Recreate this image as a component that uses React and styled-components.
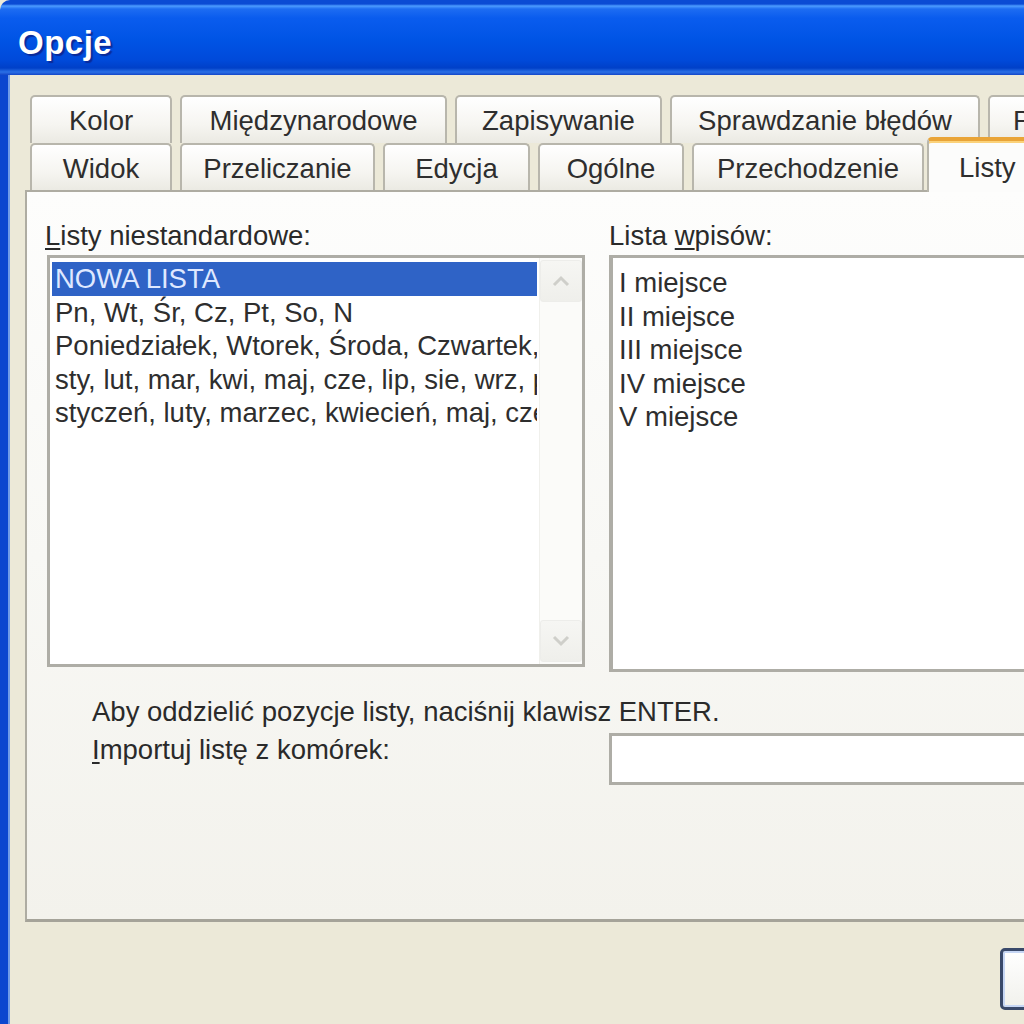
import React from "react";
import styled, { createGlobalStyle } from "styled-components";

const Global = createGlobalStyle`
  html, body { margin: 0; padding: 0; overflow: hidden; background: #ece9d8; }
  #root { width: 1024px; height: 1024px; }
`;

const FONT = `"Liberation Sans", Arial, sans-serif`;

const Window = styled.div`
  width: 1024px;
  height: 1024px;
  overflow: hidden;
  display: flex;
  flex-direction: column;
  font-family: ${FONT};
`;

const TitleBar = styled.div`
  flex: 0 0 75px;
  display: flex;
  align-items: center;
  padding-left: 18px;
  padding-top: 10px;
  box-sizing: border-box;
  border-top-left-radius: 10px;
  background: linear-gradient(
    to bottom,
    #0b4bd4 0px,
    #0b4bd4 4px,
    #4d9cff 6px,
    #1d6cf2 9px,
    #0a5cee 18px,
    #0054e5 40px,
    #004ada 60px,
    #0040c8 68px,
    #2b70e6 72px,
    #1446c8 75px
  );
`;

const Title = styled.span`
  color: #ffffff;
  font-family: ${FONT};
  font-weight: bold;
  font-size: 33px;
  letter-spacing: 0.5px;
  text-shadow: 2px 2px 1px #0a2a9a;
`;

const Frame = styled.div`
  flex: 1;
  display: flex;
  border-left: 8px solid #0b46cf;
  box-shadow: inset 2px 0 0 #6f9be8;
  background: #ece9d8;
  overflow: hidden;
`;

const Body = styled.div`
  flex: 0 0 1170px;
  display: flex;
  flex-direction: column;
  padding: 20px 0 0 17px;
  box-sizing: border-box;
`;

const TabStrip = styled.div`
  display: flex;
  flex-direction: column;
  padding-left: 5px;
`;

const TabRow = styled.div`
  display: flex;
  gap: 8px;
  height: ${(p) => p.$h}px;
  align-items: stretch;
`;

const Tab = styled.div`
  flex: 0 0 ${(p) => p.$w}px;
  box-sizing: border-box;
  display: flex;
  align-items: center;
  justify-content: center;
  border: 2px solid #b8b6ac;
  border-bottom: none;
  border-radius: 5px 5px 0 0;
  background: linear-gradient(to bottom, #ffffff 0%, #f6f5f1 60%, #ebeae3 100%);
  color: #2e2e2e;
  font-size: 27.5px;
  white-space: nowrap;
  padding-top: 2px;
`;

const ActiveTab = styled(Tab)`
  margin-top: -6px;
  margin-left: -5px;
  margin-bottom: -2px;
  position: relative;
  z-index: 1;
  justify-content: flex-start;
  padding-left: 30px;
  border-top: 4px solid #e9a437;
  box-shadow: inset 0 2px 0 #fbd27a;
  background: #fcfcfb;
`;

const Panel = styled.div`
  height: 732px;
  box-sizing: border-box;
  border: 2px solid #aeaca2;
  border-bottom: 3px solid #a5a399;
  background: linear-gradient(to bottom, #fdfdfc 0%, #f8f8f5 50%, #f3f2ec 100%);
  padding: 30px 0 0 18px;
  display: flex;
  flex-direction: column;
  color: #2a2a2a;
  font-size: 27.5px;
`;

const Columns = styled.div`
  display: grid;
  grid-template-columns: 540px 560px;
  column-gap: 24px;
`;

const Column = styled.div`
  display: flex;
  flex-direction: column;
`;

const Label = styled.div`
  height: 28px;
  line-height: 28px;
  margin-bottom: 5px;
  white-space: nowrap;
  u { text-decoration-thickness: 2px; text-underline-offset: 3px; }
`;

const ListBox = styled.div`
  margin-left: 2px;
  height: 412px;
  box-sizing: border-box;
  border: 3px solid #aeada6;
  background: #ffffff;
  display: flex;
`;

const ListItems = styled.div`
  flex: 1;
  min-width: 0;
  padding: 4px 2px;
  overflow: hidden;
`;

const ListItem = styled.div`
  height: 33.5px;
  line-height: 33.5px;
  padding-left: 3px;
  white-space: nowrap;
  overflow: hidden;
  color: ${(p) => (p.$selected ? "#dfe8ff" : "#2e2e2e")};
  background: ${(p) => (p.$selected ? "#2f63c6" : "transparent")};
`;

const ScrollBar = styled.div`
  flex: 0 0 42px;
  display: flex;
  flex-direction: column;
  justify-content: space-between;
  padding: 2px 0;
  background: #fbfbf9;
  border-left: 1px solid #f0f0ec;
`;

const ScrollButton = styled.div`
  height: 40px;
  display: flex;
  align-items: center;
  justify-content: center;
  background: linear-gradient(to bottom, #f6f6f3, #efefeb);
  border: 1px solid #ededea;
  border-radius: 3px;
`;

const EntriesBox = styled.div`
  height: 417px;
  box-sizing: border-box;
  border: 3px solid #aeada6;
  border-left-width: 4px;
  border-right: none;
  background: #ffffff;
  padding: 8px 6px;
`;

const Entry = styled.div`
  height: 33.5px;
  line-height: 33.5px;
  color: #2e2e2e;
  white-space: nowrap;
`;

const Hint = styled.div`
  margin-top: 25px;
  padding-left: 47px;
  height: 30px;
  line-height: 30px;
  white-space: nowrap;
`;

const ImportRow = styled.div`
  margin-top: 6px;
  display: grid;
  grid-template-columns: 540px 560px;
  column-gap: 24px;
  align-items: start;
`;

const ImportLabel = styled.div`
  padding-left: 47px;
  line-height: 30px;
  padding-top: 2px;
  white-space: nowrap;
  u { text-decoration-thickness: 2px; text-underline-offset: 3px; }
`;

const TextInput = styled.div`
  height: 52px;
  box-sizing: border-box;
  border: 3px solid #aeada6;
  border-right: none;
  background: #ffffff;
`;

const Footer = styled.div`
  flex: 1;
  display: flex;
  padding: 26px 0 0 975px;
`;

const Button = styled.div`
  width: 150px;
  height: 62px;
  box-sizing: border-box;
  border: 3px solid #39496a;
  border-radius: 5px;
  box-shadow: inset 0 0 0 2px #c6d6f4;
  background: linear-gradient(to bottom, #ffffff, #f1f1ec);
  display: flex;
  align-items: center;
  justify-content: center;
  font-size: 27.5px;
  color: #222;
`;

const Chevron = ({ up }) => (
  <svg width="18" height="12" viewBox="0 0 18 12">
    <path
      d={up ? "M2 10 L9 3 L16 10" : "M2 2 L9 9 L16 2"}
      fill="none"
      stroke="#cfcfca"
      strokeWidth="3"
    />
  </svg>
);

const row1 = [
  ["Kolor", 142],
  ["Międzynarodowe", 267],
  ["Zapisywanie", 207],
  ["Sprawdzanie błędów", 310],
  ["Pisownia", 160],
];

const row2 = [
  ["Widok", 142],
  ["Przeliczanie", 195],
  ["Edycja", 147],
  ["Ogólne", 146],
  ["Przechodzenie", 232],
];

const lists = [
  "NOWA LISTA",
  "Pn, Wt, Śr, Cz, Pt, So, N",
  "Poniedziałek, Wtorek, Środa, Czwartek, Piątek, Sobota, Niedziela",
  "sty, lut, mar, kwi, maj, cze, lip, sie, wrz, paź, lis, gru",
  "styczeń, luty, marzec, kwiecień, maj, czerwiec, lipiec",
];

const entries = ["I miejsce", "II miejsce", "III miejsce", "IV miejsce", "V miejsce"];

export default function App() {
  return (
    <>
      <Global />
      <Window>
        <TitleBar>
          <Title>Opcje</Title>
        </TitleBar>
        <Frame>
          <Body>
            <TabStrip>
              <TabRow $h={48}>
                {row1.map(([t, w]) => (
                  <Tab key={t} $w={w}>{t}</Tab>
                ))}
              </TabRow>
              <TabRow $h={47}>
                {row2.map(([t, w]) => (
                  <Tab key={t} $w={w}>{t}</Tab>
                ))}
                <ActiveTab $w={290}>Listy niestandardowe</ActiveTab>
              </TabRow>
            </TabStrip>
            <Panel>
              <Columns>
                <Column>
                  <Label>
                    <u>L</u>isty niestandardowe:
                  </Label>
                  <ListBox>
                    <ListItems>
                      {lists.map((l, i) => (
                        <ListItem key={l} $selected={i === 0}>{l}</ListItem>
                      ))}
                    </ListItems>
                    <ScrollBar>
                      <ScrollButton><Chevron up /></ScrollButton>
                      <ScrollButton><Chevron /></ScrollButton>
                    </ScrollBar>
                  </ListBox>
                </Column>
                <Column>
                  <Label>
                    Lista <u>w</u>pisów:
                  </Label>
                  <EntriesBox>
                    {entries.map((e) => (
                      <Entry key={e}>{e}</Entry>
                    ))}
                  </EntriesBox>
                </Column>
              </Columns>
              <Hint>Aby oddzielić pozycje listy, naciśnij klawisz ENTER.</Hint>
              <ImportRow>
                <ImportLabel>
                  <u>I</u>mportuj listę z komórek:
                </ImportLabel>
                <TextInput />
              </ImportRow>
            </Panel>
            <Footer>
              <Button>OK</Button>
            </Footer>
          </Body>
        </Frame>
      </Window>
    </>
  );
}
